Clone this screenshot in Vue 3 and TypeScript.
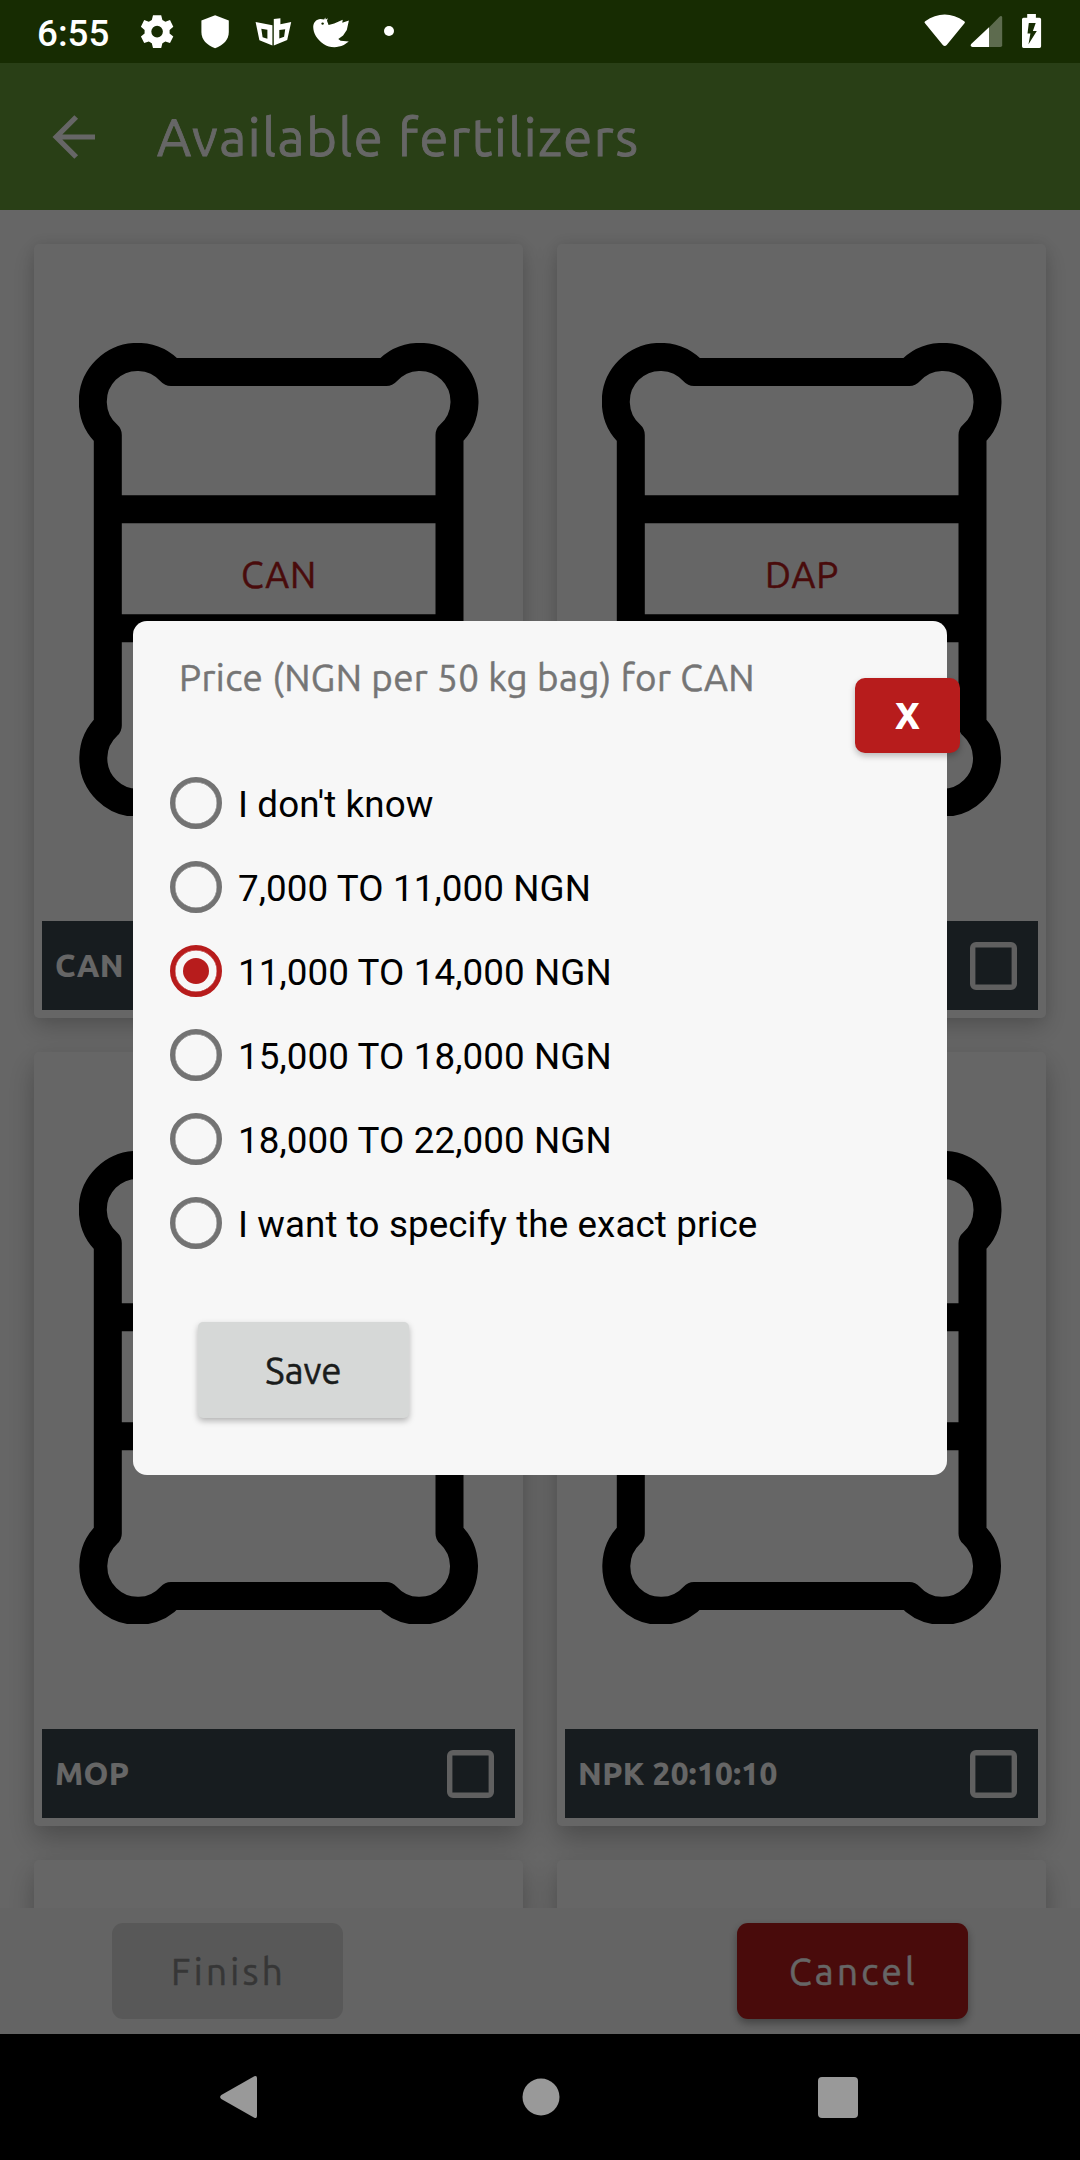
<script setup lang="ts">
import { ref } from 'vue'

interface Fertilizer {
  id: number
  bag?: string
  caption?: string
}

const fertilizers = ref<Fertilizer[]>([
  { id: 1, bag: 'CAN', caption: 'CAN' },
  { id: 2, bag: 'DAP' },
  { id: 3, caption: 'MOP' },
  { id: 4, caption: 'NPK 20:10:10' },
])

const prices: string[] = [
  "I don't know",
  '7,000 TO 11,000 NGN',
  '11,000 TO 14,000 NGN',
  '15,000 TO 18,000 NGN',
  '18,000 TO 22,000 NGN',
  'I want to specify the exact price',
]
const chosen = ref<number>(2)
const open = ref<boolean>(true)
</script>

<template>
  <div class="device">
    <header class="status">
      <span class="clock">6:55</span>
      <svg class="notes" width="270" height="63" viewBox="130 0 270 63" fill="#fff">
        <path fill-rule="evenodd" d="M153 15.2h8.200l1.200 4.800 3 1.700 4.600-1.600 3.300 6.700-3.700 3.100v3.500l3.700 3.200-3.300 6.500-4.600-1.500-3 1.700-1.200 4.700H153l-1.200-4.700-3-1.700-4.600 1.500-3.300-6.500 3.700-3.200v-3.500l-3.700-3.100 3.300-6.700 4.600 1.600 3-1.700zM157.100 25.800a5.800 5.800 0 1 0 0 11.600a5.800 5.800 0 0 0 0-11.600z" />
        <path d="M215.100 15.200l13.700 5.300v11.500c0 8-5.500 13.200-13.700 16.200c-8.200-3-13.700-8.200-13.700-16.200V20.500z" />
        <path fill-rule="evenodd" d="M255.600 22l16.800 3.300v20.200l-13-5.300zM261.300 28.700l1.300 8.600 4.800 1.400v-8.900z" />
        <path fill-rule="evenodd" d="M273.800 18.900l6.600-.7v6l10.800-2.300-4 18.200-13.400 5.400zM279.300 30v8.500l4.800-1.700 1.100-7.500z" />
        <path d="M313.200 26.800c.4-4.600 3.300-7.400 7.200-7.700l3.800.3 1-2 .6 2.200 2-1.300-.8 2.500 1.600 4.100 5.600-1.500 8.500-3.700-.4 3 6.600-2.200-2.100 9.500-3.700 5.600-4.800 3.500 2.300 1.700 8.200.8-5 3.500c-7.500 3.300-14.500 2.600-20.300-1.200c-6.500-4.400-10.200-10.100-10.300-17.100z" />
        <circle cx="322.600" cy="23.600" r="1.200" fill="#172c02" />
        <circle cx="389" cy="31" r="5" />
      </svg>
      <svg class="signals" width="120" height="63" viewBox="922 0 120 63" fill="#fff">
        <path d="M925.200 21.200c12.500-9 26.500-9 39 0c.8.700.9 1.300.3 2.100l-17.800 21.800c-1.200 1.300-2.700 1.300-3.900 0l-17.800-21.800c-.6-.8-.6-1.400.2-2.100z" />
        <path d="M989 27.500l10.500-10.700c1.200-1.200 2.700-.8 2.700.9v27.500q0 1.800-1.800 1.800H989z" opacity=".3" />
        <path d="M989 27.200V47h-16.600c-1.700 0-2.300-1.700-1.200-2.900z" />
        <path fill-rule="evenodd" d="M1027.200 14h8.700v3.700h3.600q1.600 0 1.600 1.600v27q0 1.600-1.600 1.600h-15.900q-1.600 0-1.600-1.600v-27q0-1.600 1.600-1.600h3.600zM1028.800 23l-1.300 10.500h2.900l-1.900 10.700 8.300-13.200h-3.900l2.800-8z" />
      </svg>
    </header>

    <main class="screen">
      <div class="appbar">
        <svg width="44" height="44" viewBox="0 0 44 44" fill="none" stroke="#fff" stroke-width="5.200">
          <path d="M43 22H5M24.200 2L4.200 22l20 20" />
        </svg>
        <h1>Available fertilizers</h1>
      </div>

      <section class="grid">
        <article v-for="item in fertilizers" :key="item.id" class="card">
          <div class="bag">
            <svg width="400" height="473" viewBox="79 343 400 473" fill="none" stroke="#000" stroke-width="28" stroke-linejoin="round">
              <path d="M171 372H386.300A44.700 44.700 0 1 1 449.500 435V725.500A44.500 44.500 0 1 1 386.300 788H171A44.500 44.500 0 1 1 107.800 725.500V435A44.700 44.700 0 1 1 171 372Z" />
              <path d="M108 509.300H449M108 628.300H449" />
            </svg>
            <span v-if="item.bag" class="bag-name">{{ item.bag }}</span>
          </div>
          <label class="caption">
            <span>{{ item.caption }}</span>
            <i class="box"></i>
          </label>
        </article>
        <article class="card"></article>
        <article class="card"></article>
      </section>

      <footer class="actions">
        <button class="finish" disabled>Finish</button>
        <button class="cancel">Cancel</button>
      </footer>

      <div v-if="open" class="scrim">
        <div class="dialog">
          <h2>Price (NGN per 50 kg bag) for CAN</h2>
          <button class="close" @click="open = false">X</button>
          <ul>
            <li v-for="(price, i) in prices" :key="price" @click="chosen = i">
              <i class="radio" :class="{ on: chosen === i }"></i>
              <span>{{ price }}</span>
            </li>
          </ul>
          <button class="save">Save</button>
        </div>
      </div>
    </main>

    <nav class="navbar">
      <svg width="38" height="44" viewBox="0 0 38 44" fill="#999"><path d="M34.300 1.300Q37 .2 37 3V41Q37 43.800 34.300 42.700L1.300 24Q-1 22 1.300 20Z" /></svg>
      <svg class="home" width="38" height="44" viewBox="0 0 38 44" fill="#999"><circle cx="19" cy="22" r="18.500" /></svg>
      <svg width="40" height="44" viewBox="0 0 40 44" fill="#999"><rect y="2" width="40" height="41" rx="4" /></svg>
    </nav>
  </div>
</template>

<style>
body {
  margin: 0;
  background: #000;
}
</style>

<style scoped>
* {
  box-sizing: border-box;
}
.device {
  width: 1080px;
  height: 2160px;
  display: flex;
  flex-direction: column;
  overflow: hidden;
  font-family: Ubuntu, 'Noto Sans', sans-serif;
  font-size: 36.75px;
}
button {
  border: 0;
  padding: 0;
  font: inherit;
}
.status {
  flex: none;
  height: 63px;
  display: flex;
  background: #172c02;
}
.clock {
  width: 93px;
  margin-left: 37px;
  font: 500 36.75px/67px Roboto, sans-serif;
  color: #fff;
}
.signals {
  margin-left: auto;
  margin-right: 38px;
}
.screen {
  position: relative;
  flex: none;
  height: 1971px;
  display: flex;
  flex-direction: column;
  background: #fff;
}
.appbar {
  flex: none;
  height: 147px;
  padding-left: 52px;
  display: flex;
  align-items: center;
  background: #689f38;
}
.appbar h1 {
  margin: 0 0 0 61px;
  font-size: 52.5px;
  font-weight: 400;
  letter-spacing: 1.6px;
  -webkit-text-stroke: 0.8px currentColor;
  color: #fff;
}
.grid {
  flex: none;
  height: 1698px;
  padding: 34px;
  display: grid;
  grid-template-columns: 489px 489px;
  grid-auto-rows: 774px;
  gap: 34px;
  overflow: hidden;
}
.card {
  padding: 8px;
  display: flex;
  flex-direction: column;
  border-radius: 5px;
  background: #fff;
  box-shadow: 0 10px 24px rgba(0, 0, 0, 0.18), 0 0 14px rgba(0, 0, 0, 0.08);
}
.card:nth-child(n + 3) {
  box-shadow: 0 14px 28px rgba(0, 0, 0, 0.24), 0 0 14px rgba(0, 0, 0, 0.04);
}
.bag {
  display: grid;
  flex: 1;
  padding: 91px 0 0 37px;
  align-content: start;
}
.bag svg,
.bag-name {
  grid-area: 1 / 1;
}
.bag-name {
  width: 400px;
  padding-top: 207px;
  line-height: 50px;
  letter-spacing: 0.8px;
  text-align: center;
  -webkit-text-stroke: 0.5px currentColor;
  color: #b71c1c;
}
.caption {
  flex: none;
  height: 89px;
  padding: 0 21px 0 13px;
  display: flex;
  align-items: center;
  justify-content: space-between;
  background: #3a464e;
  color: #fff;
  font-size: 31.5px;
  font-weight: 800;
  letter-spacing: 0.35px;
}
.box {
  width: 47px;
  height: 48px;
  border: 5px solid #f0f0f0;
  border-radius: 6px;
  box-shadow: inset 0 0 0 0.4px #f0f0f0;
}
.actions {
  flex: none;
  height: 126px;
  padding: 15px 112px;
  display: flex;
  justify-content: space-between;
  background: #fafafa;
}
.actions button {
  width: 231px;
  height: 96px;
  padding-left: 2px;
  border-radius: 11px;
  letter-spacing: 3.3px;
  -webkit-text-stroke: 0.5px currentColor;
}
.finish {
  background: #dcdcdc;
  color: #888;
}
.cancel {
  background: #b71c1c;
  color: #fff;
  box-shadow: 0 4px 8px rgba(0, 0, 0, 0.35);
}
.scrim {
  position: absolute;
  inset: 0;
  padding: 558px 133px 0;
  background: rgba(0, 0, 0, 0.6);
}
.dialog {
  position: relative;
  height: 854px;
  padding: 32px 37px 0;
  border-radius: 14px;
  background: #f7f7f7;
}
.dialog h2 {
  margin: 0 0 58px 9px;
  font-size: 36.75px;
  font-weight: 400;
  line-height: 50px;
  letter-spacing: 0.44px;
  -webkit-text-stroke: 0.5px currentColor;
  color: #757575;
}
.close {
  position: absolute;
  top: 57px;
  right: -13px;
  width: 105px;
  height: 75px;
  border-radius: 10px;
  background: #b71c1c;
  color: #fff;
  font-weight: 800;
  box-shadow: 0 3px 6px rgba(0, 0, 0, 0.25);
}
.dialog ul {
  margin: 0;
  padding: 0;
  list-style: none;
}
.dialog li {
  height: 84px;
  display: flex;
  align-items: center;
  gap: 16px;
  font: 36.75px Roboto, sans-serif;
  letter-spacing: 0.1px;
  color: #000;
}
.dialog li span {
  padding-top: 3px;
}
.radio {
  width: 52px;
  height: 52px;
  display: grid;
  place-items: center;
  border: 5px solid #737373;
  border-radius: 50%;
  box-shadow: inset 0 0 0 0.4px #737373;
}
.radio.on {
  border-color: #b71c1c;
  box-shadow: inset 0 0 0 0.4px #b71c1c;
}
.radio.on::after {
  content: '';
  width: 26px;
  height: 26px;
  border-radius: 50%;
  background: #b71c1c;
}
.save {
  width: 211px;
  height: 96px;
  margin: 57px 0 0 28px;
  border-radius: 5px;
  background: #d6d8d7;
  color: #1a1c1b;
  -webkit-text-stroke: 0.5px currentColor;
  box-shadow: 0 3px 6px rgba(0, 0, 0, 0.28);
}
.navbar {
  flex: none;
  height: 126px;
  padding: 0 222px 0 220px;
  display: flex;
  align-items: center;
  justify-content: space-between;
  background: #000;
}
.home {
  margin-left: 5px;
}
</style>
